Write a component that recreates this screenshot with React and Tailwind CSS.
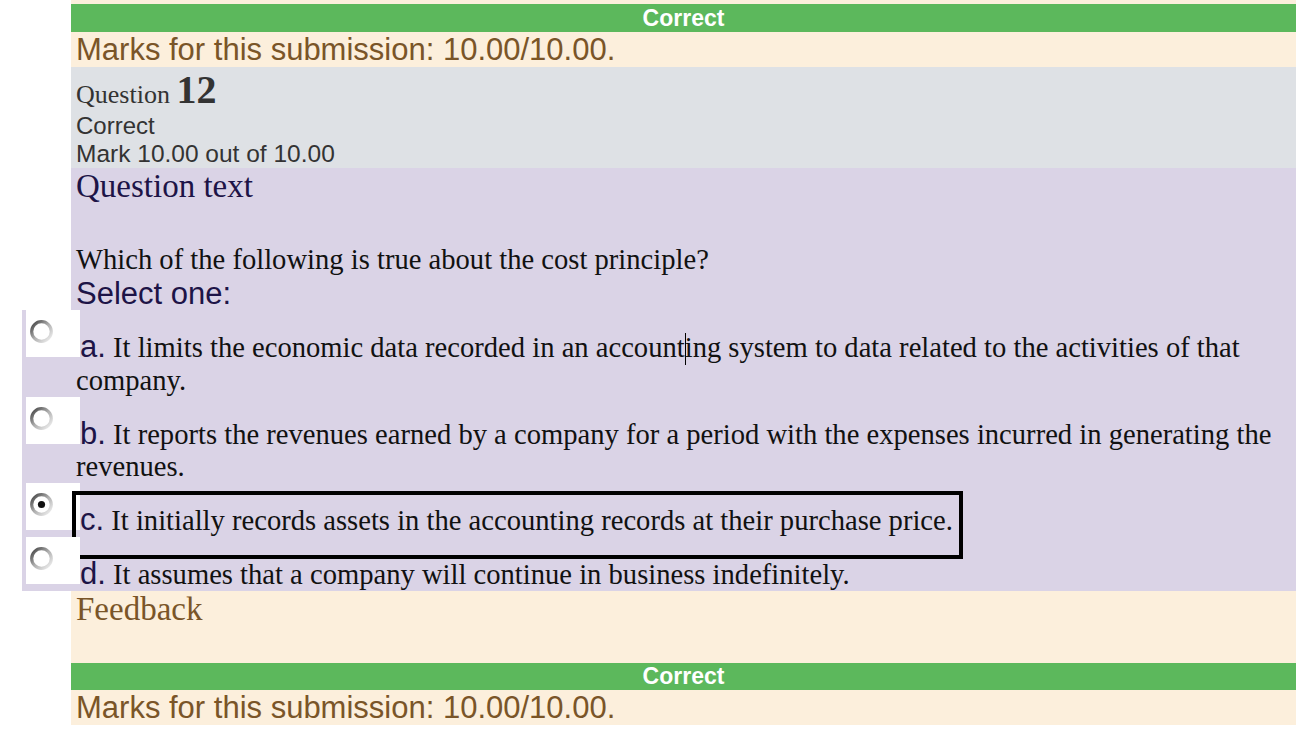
import React from "react";

function Radio({ checked }) {
  return (
    <span className="inline-block w-[54px] h-[47px] bg-white -ml-[50px] align-baseline">
      <svg className="block ml-[4px] mt-[10px]" width="23" height="23" viewBox="0 0 23 23">
        <defs>
          <linearGradient id={checked ? "rgc" : "rg"} x1="0" y1="0" x2="1" y2="1">
            <stop offset="0" stopColor="#3f3f3f" />
            <stop offset="0.5" stopColor="#b0b0b0" />
            <stop offset="1" stopColor="#f4f4f4" />
          </linearGradient>
        </defs>
        <circle cx="11.5" cy="11.5" r="9.8" fill="#ffffff" stroke={checked ? "url(#rgc)" : "url(#rg)"} strokeWidth="3.2" />
        {checked && <circle cx="11.5" cy="11.5" r="3.6" fill="#111111" />}
      </svg>
    </span>
  );
}

function Option({ letter, text, checked, children }) {
  return (
    <div className="relative pl-[54px] font-['Liberation_Serif',serif] text-[28.6px] leading-[32px] text-[#111111]">
      <Radio checked={checked} />
      <span className="font-['Liberation_Sans',sans-serif] text-[31px] leading-[32px] text-[#1d1447]">{letter}.</span>{" "}
      {children || text}
    </div>
  );
}

function GreenBar({ h }) {
  return (
    <div className={`bg-[#5cb85c] text-white font-bold text-center font-['Liberation_Sans',sans-serif] text-[23px] ${h}`}>
      Correct
    </div>
  );
}

function Marks() {
  return (
    <div className="bg-[#fcefdc] pl-[5px] h-[35px] font-['Liberation_Sans',sans-serif] text-[31px] leading-[35px] text-[#7a5528]">
      Marks for this submission: 10.00/10.00.
    </div>
  );
}

export default function App() {
  return (
    <div className="bg-white min-h-[740px] w-[1308px] pl-[71px] pr-[12px]">
      <div className="w-[1225px]">
        <div className="h-[4px] bg-[#fcefdc]" />
        <GreenBar h="h-[28px] leading-[28px]" />
        <Marks />

        <div className="bg-[#dee1e5] h-[101px] pl-[5px] text-[#333333]">
          <div className="h-[45px] leading-[45px] whitespace-nowrap">
            <span className="font-['Liberation_Serif',serif] text-[26px]">Question </span>
            <span className="font-['Liberation_Serif',serif] font-bold text-[40px]">12</span>
          </div>
          <div className="font-['Liberation_Sans',sans-serif] text-[24px] leading-[28px]">Correct</div>
          <div className="font-['Liberation_Sans',sans-serif] text-[24.5px] leading-[28px]">Mark 10.00 out of 10.00</div>
        </div>

        <div className="bg-[#dad3e6]">
          <div className="pl-[5px]">
            <div className="font-['Liberation_Serif',serif] text-[33px] leading-[36px] text-[#1d1447]">Question text</div>
            <div className="mt-[40px] font-['Liberation_Serif',serif] text-[28.6px] leading-[31px] text-[#111111]">
              Which of the following is true about the cost principle?
            </div>
            <div className="pt-[2px] font-['Liberation_Sans',sans-serif] text-[31px] leading-[33px] text-[#1d1447]">Select one:</div>
          </div>

          <div className="-ml-[49px] bg-[#dad3e6]">
            <Option letter="a">
              It limits the economic data recorded in an account
              <span className="inline-block w-px -mr-px h-[32px] bg-black align-[-8px]" />
              ing system to data related to the activities of that company.
            </Option>
            <Option
              letter="b"
              text="It reports the revenues earned by a company for a period with the expenses incurred in generating the revenues."
            />
            <Option letter="c" checked>
              <>
                It initially records assets in the accounting records at their purchase price.
                <span className="absolute left-[50px] top-[8px] w-[891px] h-[68px] border-4 border-black pointer-events-none" />
              </>
            </Option>
            <Option letter="d" text="It assumes that a company will continue in business indefinitely." />
          </div>
        </div>

        <div className="bg-[#fcefdc] h-[72px] pl-[5px] font-['Liberation_Serif',serif] text-[33px] leading-[36px] text-[#7a5528]">
          Feedback
        </div>
        <GreenBar h="h-[27px] leading-[27px]" />
        <Marks />
      </div>
    </div>
  );
}
